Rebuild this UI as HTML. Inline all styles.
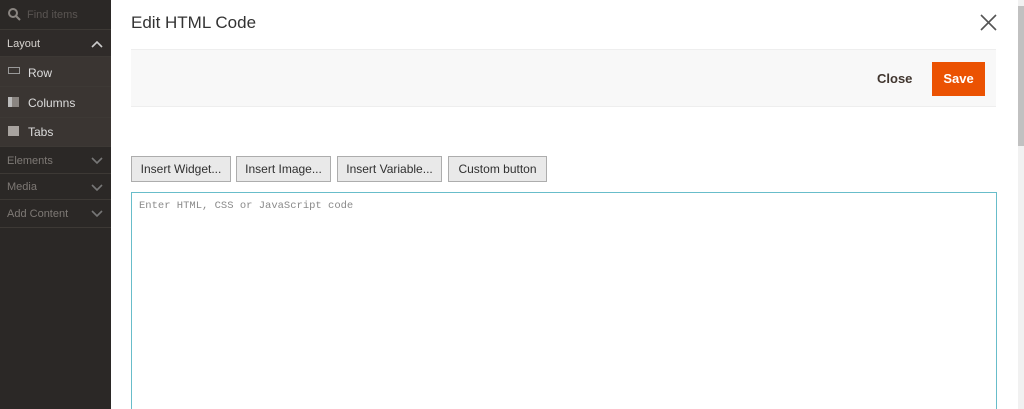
<!DOCTYPE html>
<html style="overflow:hidden;height:409px"><head><style>
*{margin:0;padding:0;box-sizing:border-box}
body{width:1024px;height:409px;overflow:hidden;background:#fff;font-family:"Liberation Sans",sans-serif;position:relative}
.sb{position:absolute;left:0;top:0;width:111px;height:409px;background:#2b2826;color:#d0ccc8;font-size:11px}
.r{position:absolute;left:0;width:111px;border-bottom:1px solid #3d3935}
.t{position:absolute;font-size:11px}
.abs{position:absolute}
.btn{position:absolute;top:156px;height:26px;background:#e9e9e9;border:1px solid #adadad;font-size:12px;color:#303030;text-align:center;line-height:24px}
</style></head><body>
<div class="sb">
 <div class="r" style="top:0;height:30px"><svg class="abs" style="left:8px;top:8px" width="13" height="13"><circle cx="5" cy="5" r="4" stroke="#8a8581" stroke-width="2" fill="none"/><line x1="8" y1="8" x2="12" y2="12" stroke="#8a8581" stroke-width="2"/></svg><span class="t" style="left:27px;top:9px;color:#5a5552">Find items</span></div>
 <div class="r" style="top:30px;height:27px;background:#2f2b29"><span class="t" style="left:7px;top:8px;color:#d8d4d0">Layout</span><svg class="abs" style="left:91px;top:10px" width="12" height="8"><polyline points="1,7 6,2 11,7" stroke="#ccc" stroke-width="1.6" fill="none"/></svg></div>
 <div class="r" style="top:57px;height:30px;background:#3a3532"><div class="abs" style="left:8px;top:10px;width:12px;height:7px;border:1px solid #999"></div><span class="t" style="left:28px;top:9px;font-size:12px;color:#ddd">Row</span></div>
 <div class="r" style="top:87px;height:31px;background:#3a3532"><div class="abs" style="left:8px;top:10px;width:11px;height:10px;background:#8a8581;border-left:4px solid #bbb"></div><span class="t" style="left:28px;top:9px;font-size:12px;color:#ddd">Columns</span></div>
 <div class="r" style="top:118px;height:29px;background:#3a3532"><div class="abs" style="left:8px;top:8px;width:11px;height:10px;background:#a8a39f"></div><span class="t" style="left:28px;top:7px;font-size:12px;color:#ddd">Tabs</span></div>
 <div class="r" style="top:147px;height:27px"><span class="t" style="left:7px;top:8px;color:#7e7975">Elements</span><svg class="abs" style="left:91px;top:10px" width="12" height="8"><polyline points="1,1 6,6 11,1" stroke="#777" stroke-width="1.6" fill="none"/></svg></div>
 <div class="r" style="top:174px;height:26px"><span class="t" style="left:7px;top:7px;color:#7e7975">Media</span><svg class="abs" style="left:91px;top:10px" width="12" height="8"><polyline points="1,1 6,6 11,1" stroke="#777" stroke-width="1.6" fill="none"/></svg></div>
 <div class="r" style="top:200px;height:28px"><span class="t" style="left:7px;top:8px;color:#7e7975">Add Content</span><svg class="abs" style="left:91px;top:10px" width="12" height="8"><polyline points="1,1 6,6 11,1" stroke="#777" stroke-width="1.6" fill="none"/></svg></div>
</div>
<div class="abs" style="left:131px;top:13px;font-size:17px;color:#333">Edit HTML Code</div>
<svg class="abs" style="left:980px;top:14px" width="17" height="17"><path d="M1 1L16 16M16 1L1 16" stroke="#555" stroke-width="1.6"/></svg>
<div class="abs" style="left:131px;top:49px;width:865px;height:58px;background:#f8f8f8;border-top:1px solid #eee;border-bottom:1px solid #eee"></div>
<div class="abs" style="left:877px;top:71px;font-size:13px;font-weight:bold;color:#41362f">Close</div>
<div class="abs" style="left:932px;top:62px;width:53px;height:34px;background:#eb5202;color:#fff;font-size:13px;font-weight:bold;text-align:center;line-height:34px">Save</div>
<div class="abs" style="left:1018px;top:0;width:6px;height:409px;background:#f1f1f1"></div>
<div class="abs" style="left:1018px;top:6px;width:6px;height:140px;background:#c1c1c1"></div>
<div class="btn" style="left:131px;width:100px">Insert Widget...</div>
<div class="btn" style="left:236px;width:95px">Insert Image...</div>
<div class="btn" style="left:337px;width:105px">Insert Variable...</div>
<div class="btn" style="left:448px;width:99px">Custom button</div>
<div class="abs" style="left:131px;top:192px;width:866px;height:217px;border:1px solid #68bdca;border-bottom:none"></div>
<div class="abs" style="left:139px;top:200px;font-family:'Liberation Mono',monospace;font-size:10.5px;color:#8a8a8a">Enter HTML, CSS or JavaScript code</div>
</body></html>
